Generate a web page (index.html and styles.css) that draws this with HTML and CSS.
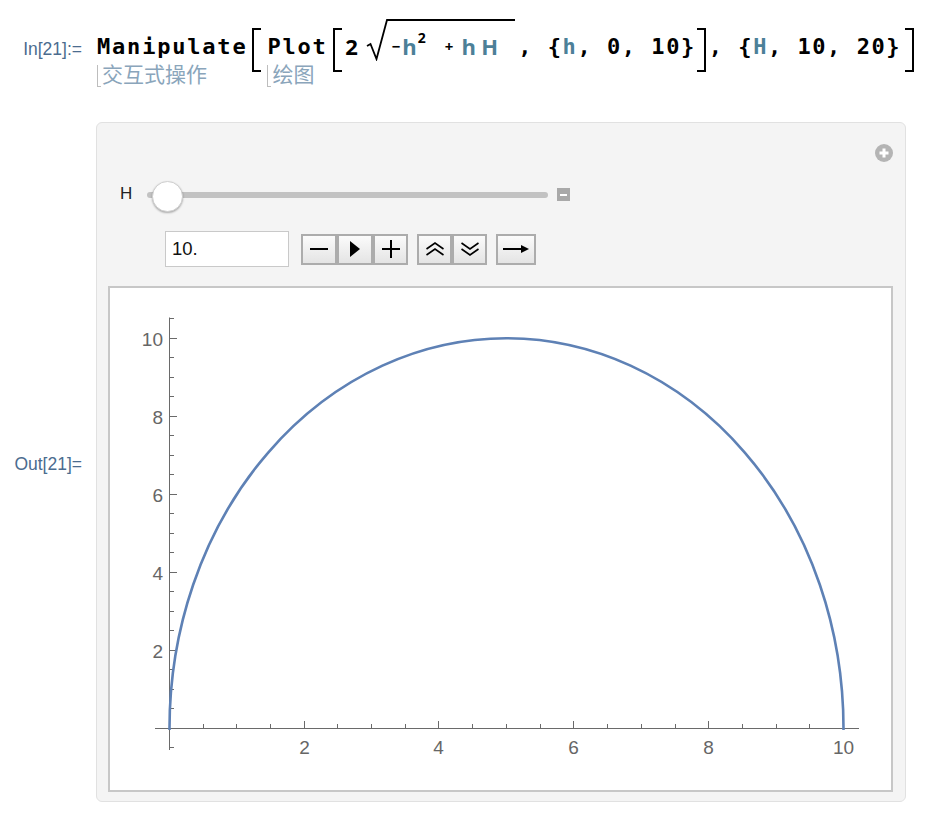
FILE: index.html
```html
<!DOCTYPE html>
<html lang="zh">
<head>
<meta charset="utf-8">
<title>Manipulate</title>
<link rel="stylesheet" href="styles.css">
</head>
<body>
<div class="cell cell-in">
  <div class="label-col">In[21]:=</div>
  <div class="formula">
    <div class="wordcol"><span class="kw">Manipulate</span><span class="hint"><i class="mark"></i>交互式操作</span></div>
    <span class="br br-a"></span>
    <div class="wordcol wordcol-plot"><span class="kw">Plot</span><span class="hint"><i class="mark"></i>绘图</span></div>
    <span class="br br-b"></span>
    <span class="num">2</span>
    <span class="sqrt">
      <svg class="radical" viewBox="0 0 22 42"><path d="M1 27 L4.5 25 L10.5 40 L21 1 H22" fill="none" stroke="#000" stroke-width="1.8"/></svg>
      <span class="radicand"><span class="op op-minus">−</span><span class="var v-h1">h</span><span class="sup">2</span><span class="op op-plus">+</span><span class="var v-h2">h</span><span class="var v-H">H</span></span>
    </span>
    <span class="kw tail tail-1">, {<span class="var">h</span>, 0, 10}</span>
    <span class="br br-close br-c"></span>
    <span class="kw tail tail-2">, {<span class="var">H</span>, 10, 20}</span>
    <span class="br br-close br-d"></span>
  </div>
</div>

<div class="cell cell-out">
  <div class="label-col">Out[21]=</div>
  <div class="panel">
    <div class="panel-head">
      <svg class="add-icon" viewBox="0 0 18 18" width="18" height="18"><circle cx="9" cy="9" r="9" fill="#b4b4b4"/><path d="M9 4.5 V13.5 M4.5 9 H13.5" stroke="#fff" stroke-width="3"/></svg>
    </div>
    <div class="slider-row">
      <span class="slider-label">H</span>
      <div class="slider">
        <div class="track"></div>
        <div class="knob"></div>
      </div>
      <span class="slider-toggle"></span>
    </div>
    <div class="controls">
      <div class="value">10.</div>
      <div class="btn-group">
        <span class="btn"><svg width="20" height="20" viewBox="0 0 20 20"><path d="M1 10 H19" stroke="#000" stroke-width="2"/></svg></span>
        <span class="btn"><svg width="12" height="18" viewBox="0 0 12 18"><polygon points="1,1 11,9 1,17" fill="#000"/></svg></span>
        <span class="btn btn-narrow"><svg width="20" height="20" viewBox="0 0 20 20"><path d="M10 1 V19 M1 10 H19" stroke="#000" stroke-width="2"/></svg></span>
      </div>
      <div class="btn-group group-2">
        <span class="btn btn-narrow"><svg width="20" height="16" viewBox="0 0 20 16"><path d="M1.5 8 L10 2 L18.5 8 M1.5 14 L10 8 L18.5 14" fill="none" stroke="#000" stroke-width="1.6"/></svg></span>
        <span class="btn btn-narrow"><svg width="20" height="16" viewBox="0 0 20 16"><path d="M1.5 2 L10 8 L18.5 2 M1.5 8 L10 14 L18.5 8" fill="none" stroke="#000" stroke-width="1.6"/></svg></span>
      </div>
      <div class="btn-group group-3">
        <span class="btn btn-wide"><svg width="26" height="10" viewBox="0 0 26 10"><path d="M0 5 H19" stroke="#000" stroke-width="2"/><polygon points="18,1 26,5 18,9" fill="#000"/></svg></span>
      </div>
    </div>
    <div class="plot">
      <svg viewBox="110 288 781 502" width="781" height="502">
        <g stroke="#6a6a6a" stroke-width="1" fill="none">
          <path d="M155 728.5 H859"/>
          <path d="M169.5 317.5 V750"/>
          <path d="M304.5 728 V721 M438.5 728 V721 M573.5 728 V721 M708.5 728 V721 M843.5 728 V721"/>
          <path d="M203.5 728 V724 M236.5 728 V724 M270.5 728 V724 M337.5 728 V724 M371.5 728 V724 M405.5 728 V724 M472.5 728 V724 M506.5 728 V724 M540.5 728 V724 M607.5 728 V724 M641.5 728 V724 M675.5 728 V724 M742.5 728 V724 M776.5 728 V724 M809.5 728 V724"/>
          <path d="M170 650.5 H177 M170 572.5 H177 M170 494.5 H177 M170 416.5 H177 M170 338.5 H177"/>
          <path d="M170 747.5 H174 M170 708.5 H174 M170 689.5 H174 M170 669.5 H174 M170 630.5 H174 M170 611.5 H174 M170 591.5 H174 M170 552.5 H174 M170 533.5 H174 M170 513.5 H174 M170 474.5 H174 M170 455.5 H174 M170 435.5 H174 M170 396.5 H174 M170 377.5 H174 M170 357.5 H174 M170 318.5 H174"/>
        </g>
        <g class="tick-labels" fill="#666">
          <text x="304.5" y="754" text-anchor="middle">2</text>
          <text x="438.5" y="754" text-anchor="middle">4</text>
          <text x="573.5" y="754" text-anchor="middle">6</text>
          <text x="708.5" y="754" text-anchor="middle">8</text>
          <text x="843.5" y="754" text-anchor="middle">10</text>
          <text x="163" y="657.5" text-anchor="end">2</text>
          <text x="163" y="579.5" text-anchor="end">4</text>
          <text x="163" y="501.5" text-anchor="end">6</text>
          <text x="163" y="423.5" text-anchor="end">8</text>
          <text x="163" y="345.5" text-anchor="end">10</text>
        </g>
        <path d="M169.5 730 L169.5 728.3 A337 390 0 0 1 843.5 728.3 L843.5 730" fill="none" stroke="#5e81b5" stroke-width="2.6"/>
      </svg>
    </div>
  </div>
</div>
</body>
</html>
```

FILE: styles.css
```css
* { box-sizing: border-box; }

body {
  margin: 0;
  background: #fff;
  font-family: "Liberation Sans", Arial, sans-serif;
}

.cell { display: flex; }

.cell-in {
  height: 122px;
  padding-top: 19px;
}

.label-col {
  width: 96px;
  flex: none;
  text-align: right;
  padding-right: 14px;
  font-size: 17.5px;
  line-height: 20px;
  color: #4b6c8f;
}

.cell-in .label-col { margin-top: 20px; }

.cell-out { align-items: center; }
.cell-out .label-col { margin-top: 4px; }

/* ---------- formula ---------- */
.formula {
  display: flex;
  align-items: flex-start;
  padding-left: 1px;
}

.kw {
  font-family: "DejaVu Sans Mono", monospace;
  font-weight: 700;
  font-size: 22px;
  line-height: 24px;
  letter-spacing: 1.8px;
  color: #000;
  white-space: pre;
}

.wordcol {
  display: flex;
  flex-direction: column;
  margin-top: 15.5px;
}

.wordcol-plot { margin-left: 6px; }

.hint {
  display: flex;
  align-items: flex-start;
  margin-top: 3px;
  height: 22px;
  font-family: "Noto Sans CJK SC", sans-serif;
  font-size: 21px;
  line-height: 22px;
  color: #8aa5bb;
  white-space: nowrap;
}

.mark {
  width: 4px;
  height: 22px;
  margin-top: 3.5px;
  margin-right: 1px;
  border-left: 1.5px solid #bdbdbd;
  border-bottom: 1.5px solid #bdbdbd;
}

.br {
  width: 9px;
  height: 44px;
  margin-top: 9px;
  border-style: solid;
  border-color: #000;
  border-width: 2px 0 2px 2.5px;
}

.br-close { border-width: 2px 2.5px 2px 0; }

.br-a { margin-left: 5px; }
.br-b { margin-left: 5.5px; }
.br-c { margin-left: 1px; }
.br-d { margin-left: 4px; }

.num {
  font-family: "Open Sans", sans-serif;
  font-weight: 700;
  font-size: 22px;
  line-height: 24px;
  margin: 15px 0 0 3px;
}

.sqrt {
  display: flex;
  margin-left: 8px;
}

.radical {
  display: block;
  width: 22px;
  height: 42px;
}

.radicand {
  display: block;
  height: 39px;
  border-top: 2px solid #000;
  padding: 13px 17px 0 4px;
  font-family: "Open Sans", sans-serif;
  font-weight: 700;
  font-size: 22px;
  line-height: 24px;
  white-space: nowrap;
}

.op {
  font-size: 15px;
  line-height: 0;
  vertical-align: 3px;
}

.op-plus { margin-left: 19px; }

.var { color: #4c8098; }
.v-h1 { margin-left: 2px; }
.v-h2 { margin-left: 8px; }
.v-H { margin-left: 5.5px; }

.sup {
  font-size: 14px;
  line-height: 0;
  vertical-align: 12px;
  margin-left: 1px;
}

.tail {
  letter-spacing: 1.55px;
  margin-top: 15.5px;
}

.tail-1 { margin-left: 3px; }
.tail-2 { margin-left: 3px; }

/* ---------- panel ---------- */
.panel {
  width: 810px;
  height: 680px;
  border: 1px solid #e1e1e1;
  border-radius: 6px;
  background: #f4f4f4;
  padding: 21px 12px 9px 11px;
  display: flex;
  flex-direction: column;
  gap: 19px;
}

.panel-head {
  display: flex;
  justify-content: flex-end;
  height: 18px;
}

.add-icon { display: block; }

.slider-row {
  display: flex;
  align-items: center;
  height: 31px;
  padding-left: 12px;
}

.slider-label {
  font-size: 17px;
  line-height: 20px;
  color: #222;
  margin-bottom: 5px;
}

.slider {
  position: relative;
  width: 401px;
  height: 31px;
  margin-left: 15px;
  display: flex;
  align-items: center;
}

.track {
  width: 100%;
  height: 6px;
  border-radius: 3px;
  background: #c2c2c2;
  margin-bottom: 3px;
}

.knob {
  position: absolute;
  left: 5px;
  top: 0;
  width: 31px;
  height: 31px;
  border-radius: 50%;
  background: #fff;
  border: 1px solid #d0d0d0;
  box-shadow: 0 1px 2px rgba(0, 0, 0, 0.3);
}

.slider-toggle {
  width: 13px;
  height: 13px;
  margin-left: 9px;
  margin-bottom: 4px;
  background: #a9a9a9;
  display: flex;
  align-items: center;
  justify-content: center;
}

.slider-toggle::after {
  content: "";
  width: 7px;
  height: 2px;
  background: #fff;
}

.controls {
  display: flex;
  align-items: center;
  height: 36px;
  padding-left: 57px;
}

.value {
  width: 124px;
  height: 36px;
  border: 1px solid #c9c9c9;
  background: #fff;
  padding-left: 6px;
  font-size: 18.5px;
  line-height: 34px;
  color: #111;
}

.btn-group {
  display: flex;
  margin-left: 12px;
}

.group-2, .group-3 { margin-left: 9px; }

.btn {
  width: 36px;
  height: 31px;
  border: 2px solid #acacac;
  background: linear-gradient(#fbfbfb, #e4e4e4);
  display: flex;
  align-items: center;
  justify-content: center;
}

.btn-narrow { width: 35px; }
.btn-wide { width: 40px; }

.btn svg { display: block; }

.plot {
  flex: 1;
  border: 2px solid #c7c7c7;
  background: #fff;
}

.plot svg { display: block; }

.tick-labels {
  font-family: "Liberation Sans", Arial, sans-serif;
  font-size: 19px;
}
```
